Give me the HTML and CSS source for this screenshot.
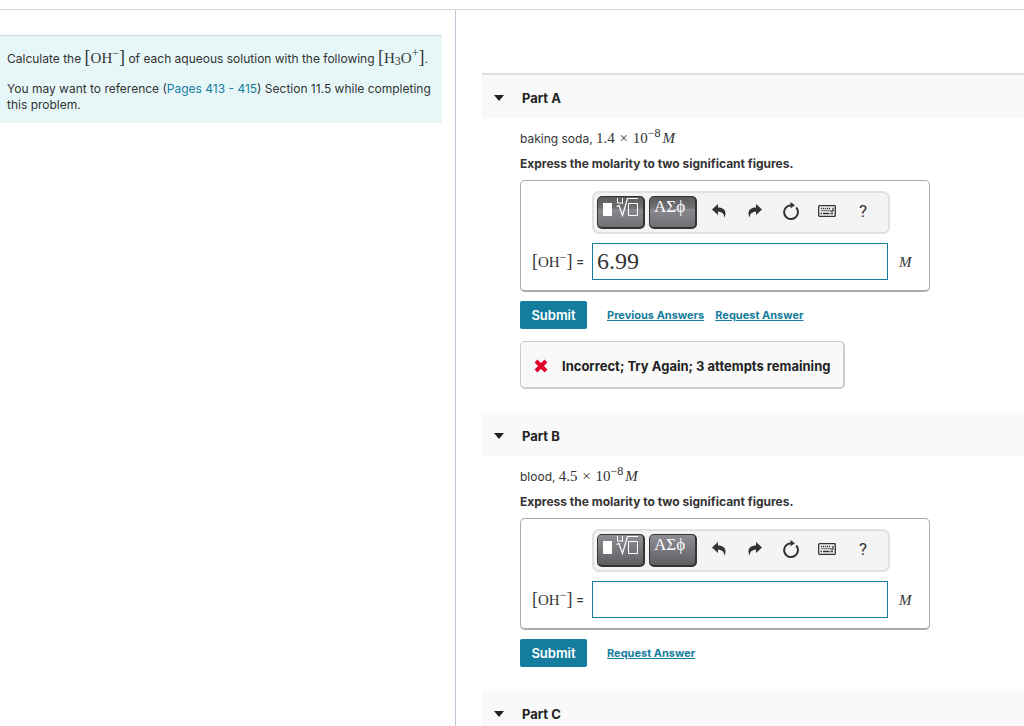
FILE: index.html
```
<!DOCTYPE html>
<html lang="en">
<head>
  <meta charset="UTF-8">
  <title>Calculate the hydroxide concentration</title>
  <link rel="stylesheet" href="styles.css">
</head>
<body>
  <!-- shared toolbar icons -->
  <svg class="sprite" aria-hidden="true">
    <symbol id="icon-root" viewBox="0 0 40 24">
      <path d="M1 6h9v13H1z" fill="#fff"/>
      <path d="M15.500 1v5h5V1M20.500 1v6" fill="none" stroke="#fff" stroke-width="1"/>
      <path d="M14.500 9.500l2.500-1 3.500 10L25.500 1.500H36" fill="none" stroke="#fff" stroke-width="1.200"/>
      <path d="M26.500 6.500h9v12h-9z" fill="none" stroke="#fff" stroke-width="1"/>
    </symbol>
    <symbol id="icon-undo" viewBox="0 0 14 14">
      <path d="M0 5.500L6 0v3.500c5 0 7.500 2.500 7.500 6 0 1.600-.4 3-1.200 4.200C12.200 10 10.500 7.800 6 7.800V11z" fill="#333"/>
    </symbol>
    <symbol id="icon-redo" viewBox="0 0 14 14">
      <path d="M14 5.500L8 0v3.500c-5 0-7.500 2.500-7.500 6 0 1.600.4 3 1.200 4.200C1.800 10 3.500 7.800 8 7.800V11z" fill="#333"/>
    </symbol>
    <symbol id="icon-reset" viewBox="0 0 16 18">
      <path d="M8.500 3.200A6.900 6.900 0 1 0 13.200 5.500" fill="none" stroke="#333" stroke-width="2"/>
      <path d="M7.500 0v6.200L12 3.200z" fill="#333"/>
    </symbol>
    <symbol id="icon-keyboard" viewBox="0 0 18 12">
      <rect x=".7" y=".7" width="16.600" height="10.600" rx=".8" fill="none" stroke="#333" stroke-width="1.300"/>
      <path d="M3 3.500h10M3.500 5.700h9" stroke="#333" stroke-width="1.300" stroke-dasharray="1.200 .8"/>
      <path d="M15 2.800v3.400h-2.500" fill="none" stroke="#333" stroke-width="1.200"/>
      <path d="M2.500 8.500h1.500M5 8.500h6.500M12.500 8.500h2.500" stroke="#333" stroke-width="1.300"/>
    </symbol>
  </svg>

  <div class="page">
    <aside class="intro">
      <div class="prompt">
        <p>Calculate the <span class="math"><span class="bracket">[</span>OH<sup>−</sup><span class="bracket">]</span></span> of each aqueous solution with the following <span class="math"><span class="bracket">[</span>H<sub>3</sub>O<sup>+</sup><span class="bracket">]</span></span>.</p>
        <p>You may want to reference (<a href="#pages">Pages 413 - 415</a>) Section 11.5 while completing this problem.</p>
      </div>
    </aside>

    <main class="parts">
      <section class="part">
        <h2 class="part-header part-header-first"><span class="caret"></span>Part A</h2>
        <div class="part-body">
          <p class="question">baking soda, <span class="math">1.4 <span class="times">×</span> 10<sup>−8</sup><i>M</i></span></p>
          <p class="instruction">Express the molarity to two significant figures.</p>
          <div class="answer-box">
            <div class="toolbar glossy">
              <button type="button" class="tool-menu" aria-label="Templates"><svg width="40" height="24"><use href="#icon-root"/></svg></button>
              <button type="button" class="tool-menu">ΑΣϕ</button>
              <button type="button" class="tool" aria-label="Undo"><svg width="14" height="14"><use href="#icon-undo"/></svg></button>
              <button type="button" class="tool" aria-label="Redo"><svg width="14" height="14"><use href="#icon-redo"/></svg></button>
              <button type="button" class="tool" aria-label="Reset"><svg width="16" height="18"><use href="#icon-reset"/></svg></button>
              <button type="button" class="tool" aria-label="Keyboard"><svg width="18" height="12"><use href="#icon-keyboard"/></svg></button>
              <button type="button" class="tool">?</button>
            </div>
            <div class="answer-row">
              <label class="math" for="answer-a"><span class="bracket">[</span>OH<sup>−</sup><span class="bracket">]</span> <span class="equals">=</span></label>
              <input type="text" id="answer-a" value="6.99">
              <i class="math unit">M</i>
            </div>
          </div>
          <div class="actions">
            <button type="button" class="submit">Submit</button>
            <a href="#previous">Previous Answers</a>
            <a href="#request-a">Request Answer</a>
          </div>
          <div class="feedback">
            <svg width="14" height="14" viewBox="0 0 14 14" aria-hidden="true"><path d="M2 2l10 10M12 2L2 12" stroke="#e0002b" stroke-width="4"/></svg>
            <span>Incorrect; Try Again; 3 attempts remaining</span>
          </div>
        </div>
      </section>

      <section class="part">
        <h2 class="part-header"><span class="caret"></span>Part B</h2>
        <div class="part-body">
          <p class="question">blood, <span class="math">4.5 <span class="times">×</span> 10<sup>−8</sup><i>M</i></span></p>
          <p class="instruction">Express the molarity to two significant figures.</p>
          <div class="answer-box">
            <div class="toolbar">
              <button type="button" class="tool-menu" aria-label="Templates"><svg width="40" height="24"><use href="#icon-root"/></svg></button>
              <button type="button" class="tool-menu">ΑΣϕ</button>
              <button type="button" class="tool" aria-label="Undo"><svg width="14" height="14"><use href="#icon-undo"/></svg></button>
              <button type="button" class="tool" aria-label="Redo"><svg width="14" height="14"><use href="#icon-redo"/></svg></button>
              <button type="button" class="tool" aria-label="Reset"><svg width="16" height="18"><use href="#icon-reset"/></svg></button>
              <button type="button" class="tool" aria-label="Keyboard"><svg width="18" height="12"><use href="#icon-keyboard"/></svg></button>
              <button type="button" class="tool">?</button>
            </div>
            <div class="answer-row">
              <label class="math" for="answer-b"><span class="bracket">[</span>OH<sup>−</sup><span class="bracket">]</span> <span class="equals">=</span></label>
              <input type="text" id="answer-b">
              <i class="math unit">M</i>
            </div>
          </div>
          <div class="actions">
            <button type="button" class="submit">Submit</button>
            <a href="#request-b">Request Answer</a>
          </div>
        </div>
      </section>

      <section class="part">
        <h2 class="part-header"><span class="caret"></span>Part C</h2>
      </section>
    </main>
  </div>
</body>
</html>
```
FILE: styles.css
```
* {
  box-sizing: border-box;
}
body {
  margin: 0;
  padding-top: 9px;
  height: 100vh;
  overflow: hidden;
  background: #fff;
  color: #333;
  font-family: Inter, "Liberation Sans", Arial, sans-serif;
  font-size: 12px;
  line-height: 16px;
}
p, h2 {
  margin: 0;
}
a {
  color: #147d9d;
}
.sprite {
  display: none;
}
.page {
  display: flex;
  height: 100%;
  border-top: 1px solid #d9dadc;
}
.intro {
  flex: 0 0 456px;
  padding: 25px 13px 0 0;
  border-right: 1px solid #b9c8d4;
}
.prompt {
  padding: 15px 4px 10px 7px;
  border-top: 1px solid #d5dcde;
  background: #e7f7f8;
}
.prompt p + p {
  margin-top: 14px;
}
.prompt a {
  text-decoration: none;
}

/* formulas */
.math {
  font-family: "Liberation Serif", "Times New Roman", serif;
  font-size: 15px;
  line-height: 0;
}
.math sup,
.math sub {
  font-size: 12px;
  line-height: 0;
}
.math sub {
  vertical-align: -2px;
}
.math i {
  margin-left: 2px;
}
.bracket {
  font-size: 18px;
  line-height: 0;
}
.times {
  margin: 0 1px;
}
.equals {
  font-family: Roboto, "Liberation Sans", Arial, sans-serif;
  font-size: 14px;
}

.parts {
  flex: 1;
  min-width: 0;
  padding: 63px 0 0 26px;
}
.part-header {
  display: flex;
  align-items: center;
  height: 43px;
  padding: 2px 0 0 12px;
  background: #f9f9f9;
  color: #222;
  font-size: 13px;
  font-weight: bold;
}
.part-header-first {
  height: 45px;
  border-top: 2px solid #e0e0e0;
}
.caret {
  margin-right: 18px;
  border: solid transparent;
  border-width: 6px 5px 0;
  border-top-color: #222;
}
.part-body {
  padding: 13px 0 24px 38px;
}
.question {
  margin-bottom: 9px;
}
.instruction {
  margin-bottom: 8px;
  font-weight: bold;
}
.answer-box {
  max-width: 410px;
  padding: 10px 41px 10px 11px;
  border: 1px solid #aaa;
  border-bottom-width: 2px;
  border-radius: 5px;
}
.toolbar {
  display: flex;
  align-items: flex-start;
  height: 43px;
  margin: 0 -2px 9px 60px;
  padding: 3px;
  border: 2px solid #e0e0e0;
  border-radius: 7px;
  background: #f4f4f4;
}
.toolbar button {
  flex: none;
  padding: 0;
  border: 0;
  cursor: pointer;
}
.toolbar .tool-menu {
  display: flex;
  width: 48px;
  height: 33px;
  margin-right: 4px;
  padding-left: 4px;
  border: solid #333;
  border-width: 1px 2px 2px 1px;
  border-radius: 5px;
  background: linear-gradient(#8f8e95, #5f5f62);
  color: #fff;
  font-family: "Liberation Serif", "Times New Roman", serif;
  font-size: 17px;
  line-height: 20px;
}
.toolbar.glossy .tool-menu {
  background: linear-gradient(#5c5c5e 0, #727275 38%, #8b8a91 40%, #6f6f73 100%);
}
.toolbar .tool {
  display: flex;
  align-items: center;
  justify-content: center;
  width: 36px;
  height: 30px;
  background: none;
  color: #333;
  font-family: Roboto, "Liberation Sans", Arial, sans-serif;
  font-size: 17px;
}
.answer-row {
  display: flex;
  align-items: center;
}
.answer-row .math {
  line-height: 16px;
}
.answer-row label {
  flex: none;
  width: 60px;
}
.answer-row input {
  flex: 1;
  min-width: 0;
  height: 37px;
  padding: 0 4px;
  border: 1px solid #147d9d;
  border-radius: 0;
  outline: 0;
  background: #fff;
  color: #333;
  font-family: "Liberation Serif", "Times New Roman", serif;
  font-size: 24px;
}
.answer-row .unit {
  width: 16px;
  margin: 0 -27px 0 11px;
}
.actions {
  display: flex;
  align-items: center;
  margin-top: 9px;
}
.actions a {
  margin-right: 11px;
  font-size: 11px;
  font-weight: bold;
}
.submit {
  width: 67px;
  height: 28px;
  margin-right: 20px;
  padding: 0;
  border: 0;
  border-radius: 2px;
  background: #147d9d;
  color: #fff;
  font-family: inherit;
  font-size: 13px;
  font-weight: 600;
}
.feedback {
  display: flex;
  align-items: center;
  width: fit-content;
  height: 48px;
  margin-top: 12px;
  padding: 2px 13px 0;
  border: 1px solid #ccc;
  border-width: 1px 2px 2px 1px;
  border-radius: 5px;
  background: #f9f9f9;
  color: #222;
  font-size: 13px;
  font-weight: bold;
}
.feedback svg {
  margin-right: 14px;
}
```
